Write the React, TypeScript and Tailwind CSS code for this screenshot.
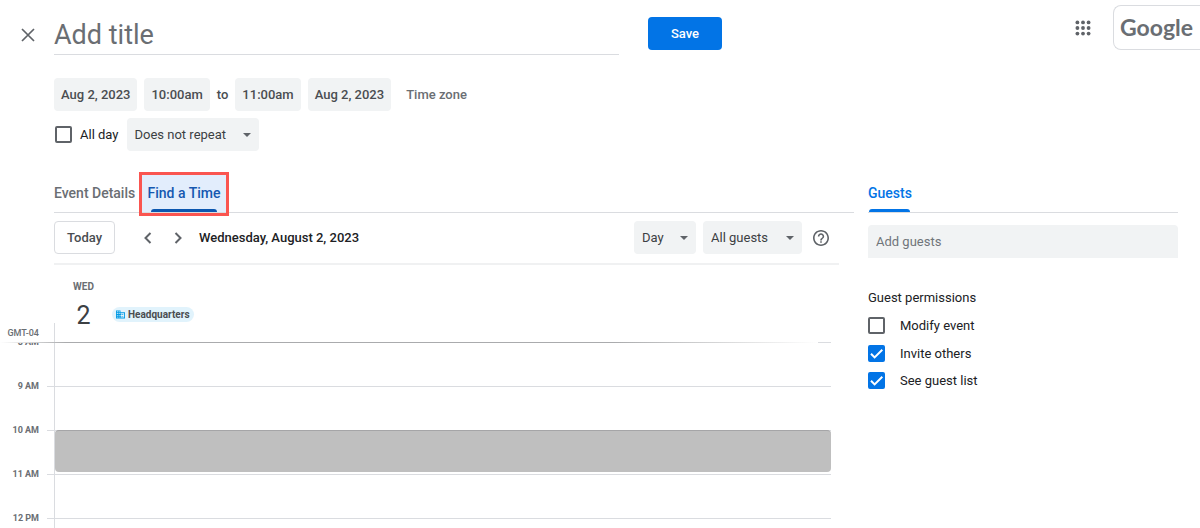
import { useState } from "react";
import type { ReactNode } from "react";

const HOURS = ["8 AM", "9 AM", "10 AM", "11 AM", "12 PM"];

function Chip({ children, label }: { children: ReactNode; label: string }) {
  return (
    <button
      type="button"
      aria-label={label}
      className="h-[33px] rounded bg-[#f1f3f4] px-[7px] text-[13px] font-medium text-[#4a4d51]"
    >
      {children}
    </button>
  );
}

function Select({
  label,
  options,
  width,
}: {
  label: string;
  options: string[];
  width: string;
}) {
  return (
    <div className={`relative ${width}`}>
      <select
        aria-label={label}
        className="h-[33px] w-full appearance-none rounded bg-[#f1f3f4] pr-6 pl-2 text-[13px] text-[#3c4043]"
      >
        {options.map((option) => (
          <option key={option}>{option}</option>
        ))}
      </select>
      <svg
        viewBox="0 0 8 4"
        className="pointer-events-none absolute top-[15px] right-2 h-1 w-2 fill-[#5f6368]"
        aria-hidden="true"
      >
        <path d="M0 0h8L4 4z" />
      </svg>
    </div>
  );
}

function Checkbox({
  label,
  initial = false,
  gap,
}: {
  label: string;
  initial?: boolean;
  gap: string;
}) {
  const [checked, setChecked] = useState(initial);
  return (
    <label className={`flex items-center text-[13px] text-[#202124] ${gap}`}>
      <span className="grid">
        <input
          type="checkbox"
          checked={checked}
          onChange={(event) => setChecked(event.target.checked)}
          className="peer col-start-1 row-start-1 size-[17px] appearance-none rounded-[2px] border-2 border-[#5f6368] checked:border-[#0274e6] checked:bg-[#0274e6]"
        />
        <svg
          viewBox="0 0 17 17"
          className="pointer-events-none invisible col-start-1 row-start-1 size-[17px] fill-none stroke-white stroke-2 peer-checked:visible"
          aria-hidden="true"
        >
          <path d="M3 8.8l3.6 3.6L14.3 4.7" />
        </svg>
      </span>
      {label}
    </label>
  );
}

function Header() {
  return (
    <header className="flex items-start">
      <button type="button" aria-label="Close" className="mt-[25px] ml-[18px] flex h-5 w-5 items-center justify-center">
        <svg viewBox="0 0 14 14" className="size-[14px] fill-none stroke-[#5f6368] stroke-[1.7]" aria-hidden="true">
          <path d="M1 1l12 12M13 1L1 13" />
        </svg>
      </button>
      <input
        type="text"
        aria-label="Title"
        placeholder="Add title"
        className="mt-4 ml-4 h-[39px] max-w-[565px] min-w-0 flex-1 border-b border-[#dadce0] text-[27px] text-[#3c4043] placeholder:text-[#6a6e73] focus:outline-none"
      />
      <button type="button" className="mt-[17px] ml-[29px] h-[33px] w-[74px] rounded bg-[#0274e6] text-[13px] font-medium text-white">
        Save
      </button>
      <button type="button" aria-label="Google apps" className="mt-[18px] mr-5 ml-auto flex h-5 w-5 items-center justify-center">
        <svg viewBox="0 0 16 16" className="size-4 fill-[#5f6368]" aria-hidden="true">
          {[2.4, 8, 13.6].map((y) =>
            [2.4, 8, 13.6].map((x) => <circle key={`${x}-${y}`} cx={x} cy={y} r="1.9" />),
          )}
        </svg>
      </button>
      <a
        href="#account"
        className="mt-[5px] flex h-[45px] w-[87px] items-center rounded-l-lg border border-r-0 border-[#dadce0] pl-[6px] font-[Lato,sans-serif] text-[23px] font-bold text-[#6a6e73]"
      >
        Google
      </a>
    </header>
  );
}

function Schedule() {
  return (
    <div className="flex items-center gap-[7px]">
      <Chip label="Start date">Aug 2, 2023</Chip>
      <Chip label="Start time">10:00am</Chip>
      <span className="text-[13px] font-medium text-[#4a4d51]">to</span>
      <Chip label="End time">11:00am</Chip>
      <Chip label="End date">Aug 2, 2023</Chip>
      <button type="button" className="ml-2 text-[13px] font-medium text-[#6a6e73]">
        Time zone
      </button>
    </div>
  );
}

function Tabs() {
  return (
    <nav role="tablist" className="flex h-[41px] border-b border-[#dadce0] text-[14px] font-medium">
      <button type="button" role="tab" aria-selected="false" className="w-[85px] pt-[2px] text-left whitespace-nowrap text-[#6a6e73]">
        Event Details
      </button>
      <div className="relative w-[90px]">
        <button
          type="button"
          role="tab"
          aria-selected="true"
          className="flex h-[40px] w-full flex-col items-center bg-[#e2edfc] text-[#1558b0]"
        >
          <span className="flex flex-1 items-center pt-[6px]">Find a Time</span>
          <span className="h-[3px] w-[66px] rounded-t-sm bg-[#0b57b0]" />
        </button>
        <span className="pointer-events-none absolute inset-x-0 top-0 h-[44px] border-3 border-[#fa5550]" />
      </div>
    </nav>
  );
}

function Chevron({ direction }: { direction: "left" | "right" }) {
  return (
    <svg viewBox="0 0 8 12" className="h-3 w-2 fill-none stroke-[#5f6368] stroke-2" aria-hidden="true">
      <path d={direction === "left" ? "M6.5 1L1.5 6l5 5" : "M1.5 1l5 5-5 5"} />
    </svg>
  );
}

function Toolbar() {
  return (
    <div className="mr-[15px] flex items-center border-b-2 border-[#f0f1f2] pt-2 pb-[9px]">
      <button type="button" className="h-[33px] w-[61px] rounded border border-[#dadce0] text-[13px] font-medium text-[#4a4d51]">
        Today
      </button>
      <button type="button" aria-label="Previous day" className="ml-[23px] flex h-5 w-5 items-center justify-center">
        <Chevron direction="left" />
      </button>
      <button type="button" aria-label="Next day" className="ml-[10px] flex h-5 w-5 items-center justify-center">
        <Chevron direction="right" />
      </button>
      <h2 className="ml-[11px] text-[13px] font-medium whitespace-nowrap text-[#202124]">Wednesday, August 2, 2023</h2>
      <div className="mr-[10px] ml-auto flex items-center gap-[7px]">
        <Select label="View" options={["Day", "Week"]} width="w-[62px]" />
        <Select label="Guests shown" options={["All guests", "Required guests"]} width="w-[99px]" />
        <button type="button" aria-label="Help" className="ml-1 flex size-4 items-center justify-center">
          <svg viewBox="2 2 20 20" className="size-4 fill-[#5f6368]" aria-hidden="true">
            <path d="M11 18h2v-2h-2v2zm1-16C6.48 2 2 6.48 2 12s4.48 10 10 10 10-4.48 10-10S17.52 2 12 2zm0 18c-4.41 0-8-3.59-8-8s3.59-8 8-8 8 3.59 8 8-3.59 8-8 8zm0-14c-2.21 0-4 1.79-4 4h2c0-1.1.9-2 2-2s2 .9 2 2c0 2-3 1.750-3 5h2c0-2.250 3-2.500 3-5 0-2.210-1.790-4-4-4z" />
          </svg>
        </button>
      </div>
    </div>
  );
}

function DayHeader() {
  return (
    <div className="flex h-[77px] items-stretch">
      <div className="flex w-[54px] items-end justify-end pr-[15px] pb-[2px] text-[9px] font-medium text-[#6a6e73]">
        GMT-04
      </div>
      <div className="flex flex-col justify-end">
        <div className="h-[19px] border-l border-[#dadce0]" />
      </div>
      <div className="flex w-[57px] flex-col items-center pt-4 text-[#3c4043]">
        <span className="text-[10px] leading-3 font-bold text-[#6a6e73]">WED</span>
        <span className="mt-[9px] text-[25px] leading-7">2</span>
      </div>
      <div className="pt-[42px]">
        <span className="flex h-[15px] items-center gap-[3px] rounded-full bg-[#e1f3fc] px-1 text-[10px] font-bold text-[#4a4d51]">
          <svg viewBox="0 0 9 9" className="size-[9px] fill-[#039be5]" aria-hidden="true">
            <path
              fillRule="evenodd"
              d="M0 .5h4.500v1.800H9v6.200H0zM.9 1.300v.9h.9v-.9zm1.800 0v.9h.9v-.9zM.9 3.100V4h.9v-.9zm1.800 0V4h.9v-.9zM.9 4.900v.9h.9v-.9zm1.800 0v.9h.9v-.9zM.9 6.700v.9h.9v-.9zm1.800 0v.9h.9v-.9zM4.500 3.200v.9h.9v.9h-.9v.9h.9v.9h-.9v.8h3.600V3.200zM6.300 4.100h.9V5h-.9zm0 1.800h.9v.9h-.9z"
            />
          </svg>
          Headquarters
        </span>
      </div>
    </div>
  );
}

function DayGrid() {
  return (
    <div className="relative flex min-h-0 flex-1 items-start overflow-hidden pr-[23px]">
      <div className="-mt-[21px] w-[39px] text-right text-[9px] font-bold text-[#6a6e73]">
        {HOURS.map((hour) => (
          <div key={hour} className="flex h-[44px] items-center justify-end">
            {hour}
          </div>
        ))}
      </div>
      <div className="ml-2 w-[7px]">
        {HOURS.map((hour) => (
          <div key={hour} className="h-[44px] border-t border-[#dadce0]" />
        ))}
      </div>
      <div className="flex-1 border-l border-[#dadce0]">
        {HOURS.map((hour) => (
          <div key={hour} className="h-[44px] border-t border-[#dadce0]">
            {hour === "10 AM" && (
              <div className="-mt-px h-[42px] rounded border-t border-[#a5a5a7] bg-[#bfbfbf]" />
            )}
          </div>
        ))}
      </div>
      <div className="absolute top-0 right-9 left-0 h-px bg-[linear-gradient(to_right,#ffffff,#aaabad_8%,#aaabad_75%,#ffffff)]" />
    </div>
  );
}

function GuestsPanel() {
  return (
    <aside className="mt-[117px] mr-[22px] w-[310px] shrink-0">
      <div role="tablist" className="flex h-[41px] border-b border-[#dadce0]">
        <button type="button" role="tab" aria-selected="true" className="flex flex-col items-center text-[14px] font-medium text-[#0274e6]">
          <span className="flex flex-1 items-center pt-[6px]">Guests</span>
          <span className="h-[3px] w-[41px] rounded-t-sm bg-[#0274e6]" />
        </button>
      </div>
      <input
        type="text"
        aria-label="Add guests"
        placeholder="Add guests"
        className="mt-3 h-[33px] w-full rounded-t bg-[#f1f3f4] px-2 text-[13px] text-[#3c4043] placeholder:text-[#70757a]"
      />
      <fieldset className="mt-8">
        <legend className="text-[13px] leading-4 text-[#202124]">Guest permissions</legend>
        <div className="mt-[10px] flex flex-col gap-[8px]">
          <Checkbox label="Modify event" gap="gap-[15px]" />
          <Checkbox label="Invite others" initial gap="gap-[15px]" />
          <Checkbox label="See guest list" initial gap="gap-[15px]" />
        </div>
      </fieldset>
    </aside>
  );
}

export default function App() {
  return (
    <div className="flex h-screen flex-col overflow-hidden bg-white font-[Roboto,sans-serif]">
      <Header />
      <main className="flex min-h-0 flex-1 gap-[14px]">
        <section className="flex min-w-0 flex-1 flex-col">
          <div className="pt-[23px] pl-[54px]">
            <Schedule />
            <div className="mt-[7px] mb-[21px] flex items-center gap-2 pl-px">
              <Checkbox label="All day" gap="gap-2" />
              <Select label="Repeat" options={["Does not repeat", "Daily", "Weekly"]} width="w-[132px]" />
            </div>
            <Tabs />
            <Toolbar />
          </div>
          <DayHeader />
          <DayGrid />
        </section>
        <GuestsPanel />
      </main>
    </div>
  );
}
